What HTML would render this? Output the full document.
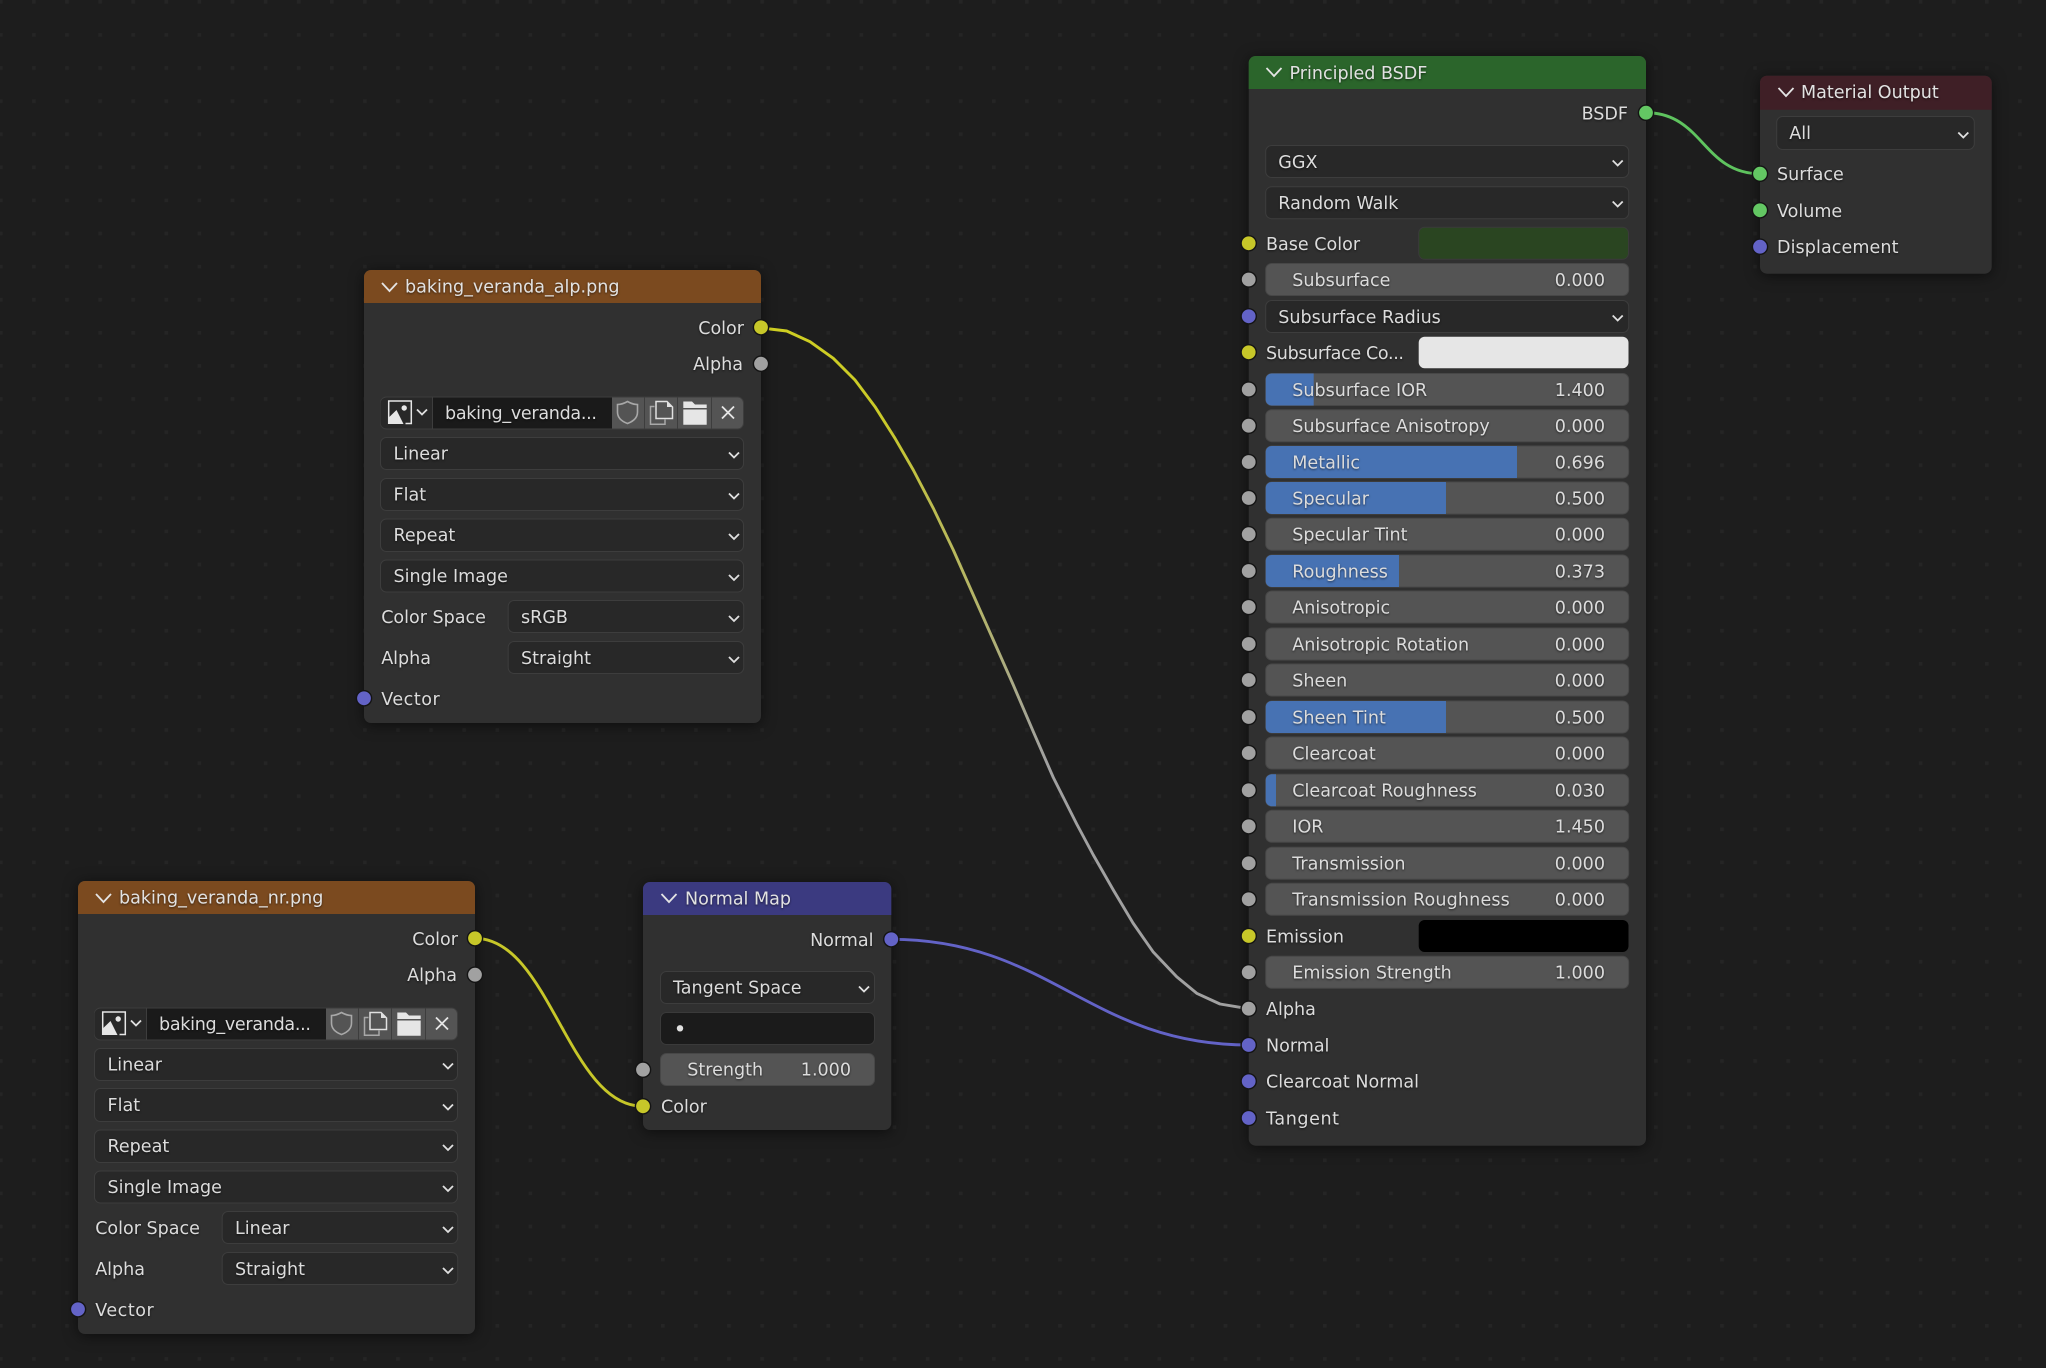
<!DOCTYPE html>
<html><head><meta charset="utf-8"><title>Node Editor</title>
<style>
html,body{margin:0;padding:0;background:#1d1d1d;width:2046px;height:1368px;overflow:hidden}
svg{display:block}
text{font-family:"DejaVu Sans","Liberation Sans",sans-serif;font-size:17.55px;fill:#dcdcdc;filter:drop-shadow(0 1px 1px rgba(0,0,0,.55))}
text.r{text-anchor:end}
text.h{fill:#e2e2e2}
.body{fill:#303030;filter:drop-shadow(0 2px 7px rgba(0,0,0,.55))}
.dd{fill:#282828;stroke:#3d3d3d;stroke-width:1}
.ch{fill:none;stroke:#e0e0e0;stroke-width:1.8}
.hc{fill:none;stroke:#e4e4e4;stroke-width:1.8}
</style></head>
<body>
<svg width="2046" height="1368" viewBox="0 0 2046 1368" xmlns="http://www.w3.org/2000/svg">
<defs>
<pattern id="grid" x="0" y="0" width="33.1" height="33.1" patternUnits="userSpaceOnUse"><rect x="-1" y="0" width="3.6" height="3.6" fill="#252525"/><rect x="32.1" y="0" width="1" height="3.6" fill="#252525"/></pattern>
<linearGradient id="wy" gradientUnits="userSpaceOnUse" x1="0" y1="327" x2="0" y2="1008"><stop offset="0" stop-color="#cfcf22"/><stop offset="0.14" stop-color="#c9c92a"/><stop offset="0.26" stop-color="#bcbc50"/><stop offset="0.44" stop-color="#b2b270"/><stop offset="0.58" stop-color="#a5a596"/><stop offset="0.64" stop-color="#a1a1a1"/><stop offset="1" stop-color="#a1a1a1"/></linearGradient>
<circle id="sg" r="7.6" fill="#a1a1a1" stroke="#141414" stroke-width="1.4"/>
<circle id="sy" r="7.6" fill="#c7c729" stroke="#141414" stroke-width="1.4"/>
<circle id="sb" r="7.6" fill="#6363c7" stroke="#141414" stroke-width="1.4"/>
<circle id="sn" r="7.6" fill="#63c763" stroke="#141414" stroke-width="1.4"/>
<rect id="sl" y="-16" width="363" height="32" rx="6" fill="#545454" stroke="#474747" stroke-width="1"/>
<path id="cv" class="ch" d="M-5,-1.5 L0,3.5 L5,-1.5"/>
<path id="hd" class="hc" d="M0,0 L7.5,8 L15,0"/>
</defs>
<rect width="2046" height="1368" fill="#1d1d1d"/>
<rect width="2046" height="1368" fill="url(#grid)"/>

<!-- wires -->
<g fill="none" stroke-width="2.9" stroke-linecap="round" stroke-linejoin="round">
<polyline stroke="url(#wy)" points="761,327.3 770,329 786.7,331 810,341.7 833.3,358.3 855,380 875,406.7 895,438.3 913.3,470 933.3,508.3 953.3,550 973.3,595 993.3,640 1013.3,685 1033.3,731.7 1053.3,777.5 1076.7,824 1093.3,855 1113.3,890 1133,923 1153,951.7 1176.7,976.7 1196.7,993.3 1220,1004 1240,1007.3 1249,1008.7"/>
<path stroke="#c7c729" d="M475,938.3 C550,938.3 568,1106.3 643,1106.3"/>
<path stroke="#6363c7" d="M891,939.3 C1050,939.3 1090,1045 1249,1045"/>
<path stroke="#5fc45f" d="M1646,112.7 C1703,112.7 1703,173.7 1760,173.7"/>
</g>

<!-- Image node A -->
<g>
<rect class="body" x="364" y="270" width="397" height="453" rx="7"/>
<path fill="#7b4a1f" d="M371,270 H754 A7,7 0 0 1 761,277 V303 H364 V277 A7,7 0 0 1 371,270 Z"/>
<use href="#hd" x="382" y="283"/>
<text class="h" x="405" y="292.6">baking_veranda_alp.png</text>
<text class="r" x="744" y="334">Color</text>
<text class="r" x="743" y="370">Alpha</text>
<rect x="380.5" y="397" width="363" height="32" rx="6" fill="#545454" stroke="#3d3d3d"/>
<path fill="#282828" d="M432,397.5 H386.5 A6,6 0 0 0 380.5,403.5 V422.5 A6,6 0 0 0 386.5,428.5 H432 Z"/>
<rect x="432.5" y="397.5" width="179.5" height="31" fill="#1a1a1a"/>
<path stroke="#3d3d3d" fill="none" d="M432.5,397 V429 M644.5,397 V429 M677.5,397 V429 M711.5,397 V429"/>
<path fill="none" stroke="#e6e6e6" stroke-width="1.5" d="M388.7,424 V401 H411.3 V423.5 H405.5"/>
<path fill="#e6e6e6" d="M388.3,424 V418 L396.5,410 L403.5,424 Z"/>
<circle cx="404.2" cy="408" r="2.7" fill="#e6e6e6"/>
<path class="ch" d="M417,409.5 L422,414.5 L427,409.5"/>
<text x="445" y="418.8" textLength="152" lengthAdjust="spacing">baking_veranda...</text>
<path fill="none" stroke="#a8a8a8" stroke-width="1.6" d="M627.5,401.5 C631,403.5 634,404.5 637.5,404.5 V412 C637.5,418 633,421.5 627.5,423.5 C622,421.5 617.5,418 617.5,412 V404.5 C621,404.5 624,403.5 627.5,401.5 Z"/>
<path fill="none" stroke="#a8a8a8" stroke-width="1.5" d="M654.5,406.5 H650.5 V424.3 H665 V419.5"/>
<path fill="none" stroke="#e0e0e0" stroke-width="1.5" d="M656,418.5 V401.5 H667 L672.5,407 V418.5 Z"/>
<path fill="#e0e0e0" d="M667,401.5 L672.5,407 H667 Z"/>
<path fill="#e6e6e6" d="M683.3,401.5 H692 L695,404.5 H706.7 V408 H683.3 Z M683.3,409.5 H706.7 V424.7 H683.3 Z"/>
<path fill="none" stroke="#e6e6e6" stroke-width="1.8" d="M722,406.5 L734,418.5 M734,406.5 L722,418.5"/>
<rect class="dd" x="380.5" y="437.5" width="363" height="32" rx="6"/><text x="393.5" y="459.7">Linear</text><use href="#cv" x="734" y="454"/>
<rect class="dd" x="380.5" y="478.5" width="363" height="32" rx="6"/><text x="393.5" y="500.7">Flat</text><use href="#cv" x="734" y="495"/>
<rect class="dd" x="380.5" y="519" width="363" height="32.5" rx="6"/><text x="393.5" y="541">Repeat</text><use href="#cv" x="734" y="535.5"/>
<rect class="dd" x="380.5" y="560" width="363" height="32" rx="6"/><text x="393.5" y="582">Single Image</text><use href="#cv" x="734" y="576.5"/>
<text x="381.2" y="623">Color Space</text>
<rect class="dd" x="508.2" y="600.5" width="235.5" height="32" rx="6"/><text x="521" y="623">sRGB</text><use href="#cv" x="734" y="617.5"/>
<text x="381.2" y="664">Alpha</text>
<rect class="dd" x="508.2" y="641.5" width="235.5" height="32" rx="6"/><text x="521" y="664">Straight</text><use href="#cv" x="734" y="658.5"/>
<text x="381.2" y="705" textLength="58.5" lengthAdjust="spacing">Vector</text>
<use href="#sy" x="761" y="327.3"/><use href="#sg" x="761" y="363.7"/><use href="#sb" x="364" y="698.3"/>
</g>

<!-- Image node B -->
<g transform="translate(-286,611)">
<rect class="body" x="364" y="270" width="397" height="453" rx="7"/>
<path fill="#7b4a1f" d="M371,270 H754 A7,7 0 0 1 761,277 V303 H364 V277 A7,7 0 0 1 371,270 Z"/>
<use href="#hd" x="382" y="283"/>
<text class="h" x="405" y="292.6">baking_veranda_nr.png</text>
<text class="r" x="744" y="334">Color</text>
<text class="r" x="743" y="370">Alpha</text>
<rect x="380.5" y="397" width="363" height="32" rx="6" fill="#545454" stroke="#3d3d3d"/>
<path fill="#282828" d="M432,397.5 H386.5 A6,6 0 0 0 380.5,403.5 V422.5 A6,6 0 0 0 386.5,428.5 H432 Z"/>
<rect x="432.5" y="397.5" width="179.5" height="31" fill="#1a1a1a"/>
<path stroke="#3d3d3d" fill="none" d="M432.5,397 V429 M644.5,397 V429 M677.5,397 V429 M711.5,397 V429"/>
<path fill="none" stroke="#e6e6e6" stroke-width="1.5" d="M388.7,424 V401 H411.3 V423.5 H405.5"/>
<path fill="#e6e6e6" d="M388.3,424 V418 L396.5,410 L403.5,424 Z"/>
<circle cx="404.2" cy="408" r="2.7" fill="#e6e6e6"/>
<path class="ch" d="M417,409.5 L422,414.5 L427,409.5"/>
<text x="445" y="418.8" textLength="152" lengthAdjust="spacing">baking_veranda...</text>
<path fill="none" stroke="#a8a8a8" stroke-width="1.6" d="M627.5,401.5 C631,403.5 634,404.5 637.5,404.5 V412 C637.5,418 633,421.5 627.5,423.5 C622,421.5 617.5,418 617.5,412 V404.5 C621,404.5 624,403.5 627.5,401.5 Z"/>
<path fill="none" stroke="#a8a8a8" stroke-width="1.5" d="M654.5,406.5 H650.5 V424.3 H665 V419.5"/>
<path fill="none" stroke="#e0e0e0" stroke-width="1.5" d="M656,418.5 V401.5 H667 L672.5,407 V418.5 Z"/>
<path fill="#e0e0e0" d="M667,401.5 L672.5,407 H667 Z"/>
<path fill="#e6e6e6" d="M683.3,401.5 H692 L695,404.5 H706.7 V408 H683.3 Z M683.3,409.5 H706.7 V424.7 H683.3 Z"/>
<path fill="none" stroke="#e6e6e6" stroke-width="1.8" d="M722,406.5 L734,418.5 M734,406.5 L722,418.5"/>
<rect class="dd" x="380.5" y="437.5" width="363" height="32" rx="6"/><text x="393.5" y="459.7">Linear</text><use href="#cv" x="734" y="454"/>
<rect class="dd" x="380.5" y="477.5" width="363" height="33" rx="6"/><text x="393.5" y="500">Flat</text><use href="#cv" x="734" y="495"/>
<rect class="dd" x="380.5" y="519" width="363" height="32.5" rx="6"/><text x="393.5" y="541">Repeat</text><use href="#cv" x="734" y="535.5"/>
<rect class="dd" x="380.5" y="560" width="363" height="32" rx="6"/><text x="393.5" y="582">Single Image</text><use href="#cv" x="734" y="576.5"/>
<text x="381.2" y="623">Color Space</text>
<rect class="dd" x="508.2" y="600.5" width="235.5" height="32" rx="6"/><text x="521" y="623">Linear</text><use href="#cv" x="734" y="617.5"/>
<text x="381.2" y="664">Alpha</text>
<rect class="dd" x="508.2" y="641.5" width="235.5" height="32" rx="6"/><text x="521" y="664">Straight</text><use href="#cv" x="734" y="658.5"/>
<text x="381.2" y="705" textLength="58.5" lengthAdjust="spacing">Vector</text>
<use href="#sy" x="761" y="327.3"/><use href="#sg" x="761" y="363.7"/><use href="#sb" x="364" y="698.3"/>
</g>

<!-- Normal Map -->
<g>
<rect class="body" x="643" y="882" width="248.3" height="248" rx="7"/>
<path fill="#3b3a80" d="M650,882 H884.3 A7,7 0 0 1 891.3,889 V915 H643 V889 A7,7 0 0 1 650,882 Z"/>
<use href="#hd" x="661.5" y="894"/>
<text class="h" x="685" y="904.5">Normal Map</text>
<text class="r" x="873.5" y="946">Normal</text>
<rect class="dd" x="660.5" y="971.5" width="214" height="32" rx="6"/><text x="673" y="993.7">Tangent Space</text><use href="#cv" x="864" y="988"/>
<rect x="660.5" y="1012.5" width="214" height="32" rx="6" fill="#1b1b1b" stroke="#3a3a3a"/>
<circle cx="680" cy="1028.3" r="3.2" fill="#e0e0e0"/>
<rect x="660.5" y="1053.5" width="214" height="32" rx="6" fill="#545454" stroke="#474747"/>
<text x="687.3" y="1075.7">Strength</text>
<text class="r" x="851" y="1075.7">1.000</text>
<text x="661" y="1112.7">Color</text>
<use href="#sb" x="891.3" y="939.3"/><use href="#sg" x="643" y="1069.7"/><use href="#sy" x="643" y="1106.3"/>
</g>

<!-- Principled BSDF -->
<g>
<rect class="body" x="1248.7" y="56" width="397.3" height="1089.7" rx="7"/>
<path fill="#2b652b" d="M1255.7,56 H1639 A7,7 0 0 1 1646,63 V89 H1248.7 V63 A7,7 0 0 1 1255.7,56 Z"/>
<use href="#hd" x="1266.5" y="68"/>
<text class="h" x="1289.5" y="79">Principled BSDF</text>
<text class="r" x="1628" y="119.3">BSDF</text>
<use href="#sn" x="1646" y="112.7"/>
<rect class="dd" x="1265.7" y="145.5" width="363" height="32" rx="6"/><text x="1278.3" y="168">GGX</text><use href="#cv" x="1617.7" y="162"/>
<rect class="dd" x="1265.7" y="186.7" width="363" height="32" rx="6"/><text x="1278.3" y="209">Random Walk</text><use href="#cv" x="1617.7" y="203"/>
<text x="1266" y="250">Base Color</text>
<rect x="1418.7" y="227.3" width="209.8" height="32" rx="6" fill="#2a4521" stroke="#3a3a3a"/>
<use href="#sy" x="1248.7" y="243.3"/>

<g transform="translate(1265.7,279.5)"><use href="#sl"/><text x="26.6" y="6.3">Subsurface</text><text class="r" x="339.3" y="6.3">0.000</text><use href="#sg" x="-17"/></g>

<rect class="dd" x="1265.7" y="300.5" width="363" height="32" rx="6"/><text x="1278.3" y="323">Subsurface Radius</text><use href="#cv" x="1617.7" y="317"/><use href="#sb" x="1248.7" y="316.3"/>

<text x="1266" y="359" textLength="138" lengthAdjust="spacing">Subsurface Co...</text>
<rect x="1418.7" y="336.7" width="209.8" height="31.5" rx="6" fill="#e6e6e6"/>
<use href="#sy" x="1248.7" y="352.3"/>

<g transform="translate(1265.7,389.5)"><use href="#sl"/><path fill="#4772b3" d="M48,-16 H6 A6,6 0 0 0 0,-10 V10 A6,6 0 0 0 6,16 H48 Z"/><text x="26.6" y="6.3">Subsurface IOR</text><text class="r" x="339.3" y="6.3">1.400</text><use href="#sg" x="-17"/></g>
<g transform="translate(1265.7,425.7)"><use href="#sl"/><text x="26.6" y="6.3">Subsurface Anisotropy</text><text class="r" x="339.3" y="6.3">0.000</text><use href="#sg" x="-17"/></g>
<g transform="translate(1265.7,462)"><use href="#sl"/><path fill="#4772b3" d="M251.3,-16 H6 A6,6 0 0 0 0,-10 V10 A6,6 0 0 0 6,16 H251.3 Z"/><text x="26.6" y="6.3">Metallic</text><text class="r" x="339.3" y="6.3">0.696</text><use href="#sg" x="-17"/></g>
<g transform="translate(1265.7,498)"><use href="#sl"/><path fill="#4772b3" d="M180.3,-16 H6 A6,6 0 0 0 0,-10 V10 A6,6 0 0 0 6,16 H180.3 Z"/><text x="26.6" y="6.3">Specular</text><text class="r" x="339.3" y="6.3">0.500</text><use href="#sg" x="-17"/></g>
<g transform="translate(1265.7,534.2)"><use href="#sl"/><text x="26.6" y="6.3">Specular Tint</text><text class="r" x="339.3" y="6.3">0.000</text><use href="#sg" x="-17"/></g>
<g transform="translate(1265.7,571)"><use href="#sl"/><path fill="#4772b3" d="M133.3,-16 H6 A6,6 0 0 0 0,-10 V10 A6,6 0 0 0 6,16 H133.3 Z"/><text x="26.6" y="6.3">Roughness</text><text class="r" x="339.3" y="6.3">0.373</text><use href="#sg" x="-17"/></g>
<g transform="translate(1265.7,607)"><use href="#sl"/><text x="26.6" y="6.3">Anisotropic</text><text class="r" x="339.3" y="6.3">0.000</text><use href="#sg" x="-17"/></g>
<g transform="translate(1265.7,644)"><use href="#sl"/><text x="26.6" y="6.3">Anisotropic Rotation</text><text class="r" x="339.3" y="6.3">0.000</text><use href="#sg" x="-17"/></g>
<g transform="translate(1265.7,680)"><use href="#sl"/><text x="26.6" y="6.3">Sheen</text><text class="r" x="339.3" y="6.3">0.000</text><use href="#sg" x="-17"/></g>
<g transform="translate(1265.7,717)"><use href="#sl"/><path fill="#4772b3" d="M180.3,-16 H6 A6,6 0 0 0 0,-10 V10 A6,6 0 0 0 6,16 H180.3 Z"/><text x="26.6" y="6.3">Sheen Tint</text><text class="r" x="339.3" y="6.3">0.500</text><use href="#sg" x="-17"/></g>
<g transform="translate(1265.7,753)"><use href="#sl"/><text x="26.6" y="6.3">Clearcoat</text><text class="r" x="339.3" y="6.3">0.000</text><use href="#sg" x="-17"/></g>
<g transform="translate(1265.7,790.3)"><use href="#sl"/><path fill="#4772b3" d="M10.3,-16 H6 A6,6 0 0 0 0,-10 V10 A6,6 0 0 0 6,16 H10.3 Z"/><text x="26.6" y="6.3">Clearcoat Roughness</text><text class="r" x="339.3" y="6.3">0.030</text><use href="#sg" x="-17"/></g>
<g transform="translate(1265.7,826.3)"><use href="#sl"/><text x="26.6" y="6.3">IOR</text><text class="r" x="339.3" y="6.3">1.450</text><use href="#sg" x="-17"/></g>
<g transform="translate(1265.7,863.3)"><use href="#sl"/><text x="26.6" y="6.3">Transmission</text><text class="r" x="339.3" y="6.3">0.000</text><use href="#sg" x="-17"/></g>
<g transform="translate(1265.7,899.3)"><use href="#sl"/><text x="26.6" y="6.3" textLength="217.5" lengthAdjust="spacing">Transmission Roughness</text><text class="r" x="339.3" y="6.3">0.000</text><use href="#sg" x="-17"/></g>

<text x="1266" y="942.3">Emission</text>
<rect x="1418.7" y="920" width="209.8" height="32" rx="6" fill="#000"/>
<use href="#sy" x="1248.7" y="936"/>

<g transform="translate(1265.7,972.3)"><use href="#sl"/><text x="26.6" y="6.3">Emission Strength</text><text class="r" x="339.3" y="6.3">1.000</text><use href="#sg" x="-17"/></g>

<text x="1266" y="1015">Alpha</text><use href="#sg" x="1248.7" y="1008.7"/>
<text x="1266" y="1051.3">Normal</text><use href="#sb" x="1248.7" y="1045"/>
<text x="1266" y="1087.6" textLength="153" lengthAdjust="spacing">Clearcoat Normal</text><use href="#sb" x="1248.7" y="1081.3"/>
<text x="1266" y="1124.3" textLength="73" lengthAdjust="spacing">Tangent</text><use href="#sb" x="1248.7" y="1118"/>
</g>

<!-- Material Output -->
<g>
<rect class="body" x="1760" y="75.7" width="231.7" height="198" rx="7"/>
<path fill="#3f1f26" d="M1767,75.7 H1984.7 A7,7 0 0 1 1991.7,82.7 V109.7 H1760 V82.7 A7,7 0 0 1 1767,75.7 Z"/>
<use href="#hd" x="1778.5" y="88"/>
<text class="h" x="1801" y="98">Material Output</text>
<rect class="dd" x="1776.7" y="116.5" width="197.6" height="33" rx="6"/><text x="1789.3" y="139">All</text><use href="#cv" x="1963.3" y="134"/>
<text x="1777" y="180">Surface</text><use href="#sn" x="1760" y="173.7"/>
<text x="1777" y="216.8">Volume</text><use href="#sn" x="1760" y="210.3"/>
<text x="1777" y="253.2" textLength="121.5" lengthAdjust="spacing">Displacement</text><use href="#sb" x="1760" y="246.7"/>
</g>
</svg>
</body></html>
